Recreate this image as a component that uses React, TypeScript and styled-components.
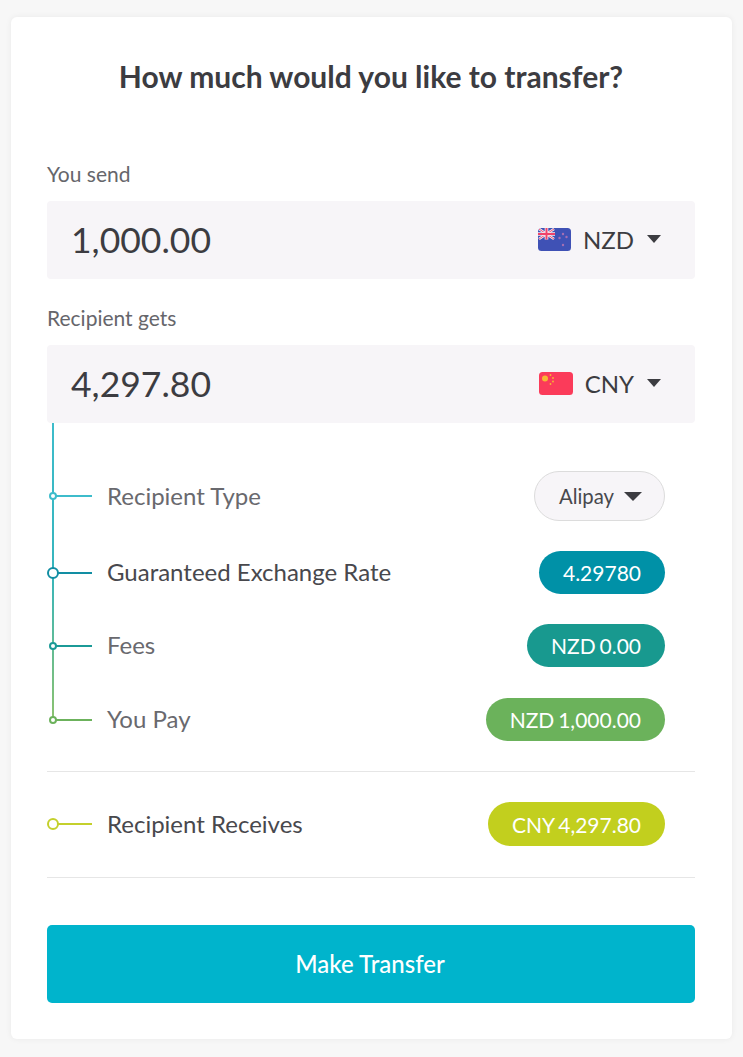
import styled, { createGlobalStyle } from 'styled-components';

const GlobalStyle = createGlobalStyle`
    html, body {
        margin: 0;
        padding: 0;
        background: #f7f7f7;
        font-family: Lato, "Liberation Sans", sans-serif;
    }
`;

const Page = styled.div`
    width: 743px;
    height: 1057px;
    padding: 17px 11px 18px;
    box-sizing: border-box;
    overflow: hidden;
`;

const Card = styled.div`
    width: 721px;
    height: 1022px;
    box-sizing: border-box;
    padding: 0 37px 0 36px;
    background: #fff;
    border-radius: 6px;
    box-shadow: 0 0 6px rgba(0, 0, 0, 0.06);
`;

const Title = styled.h1`
    margin: 0;
    height: 120px;
    line-height: 118px;
    font-size: 30px;
    font-weight: 700;
    color: #3c3c41;
    text-align: center;
`;

const FieldLabel = styled.div`
    height: 64px;
    line-height: 74px;
    font-size: 21px;
    color: #66666b;

    &.second {
        height: 66px;
        line-height: 78px;
    }
`;

const AmountBox = styled.div`
    display: flex;
    align-items: center;
    justify-content: space-between;
    height: 78px;
    padding: 0 34px 2px 24px;
    box-sizing: border-box;
    background: #f7f5f8;
    border-radius: 4px;
`;

const Amount = styled.span`
    font-size: 35.5px;
    color: #3c3c41;
`;

const Currency = styled.div`
    display: flex;
    align-items: center;
    font-size: 24px;
    color: #3c3c41;
`;

const CurrencyCode = styled.span`
    margin: 0 13px 0 12px;
`;

const Caret = styled.span<{ $w?: number }>`
    width: 0;
    height: 0;
    border-left: ${(p) => p.$w ?? 7.5}px solid transparent;
    border-right: ${(p) => p.$w ?? 7.5}px solid transparent;
    border-top: ${(p) => ((p.$w ?? 7.5) * 8) / 7.5}px solid #3c3c41;
`;

const Timeline = styled.div`
    position: relative;
    display: flex;
    flex-direction: column;
    gap: 30px;
    padding: 48px 0 30px;

    &::before {
        content: '';
        position: absolute;
        left: 5px;
        top: 0;
        width: 2px;
        height: 296px;
        background: linear-gradient(#3dbccb 0%, #36b5bd 50%, #8cc26f 100%);
    }
`;

const Row = styled.div`
    display: flex;
    align-items: center;
    padding-right: 30px;

    &:last-child {
        margin-top: 1px;
    }
`;

const Marker = styled.div<{ $line: string; $big?: boolean }>`
    position: relative;
    flex: none;
    width: 45px;
    height: 2px;
    background: linear-gradient(${(p) => p.$line}, ${(p) => p.$line}) no-repeat 5px 0 / 40px 100%;

    &::after {
        content: '';
        position: absolute;
        box-sizing: border-box;
        top: ${(p) => (p.$big ? '-5px' : '-3px')};
        left: ${(p) => (p.$big ? '0' : '2px')};
        width: ${(p) => (p.$big ? '12px' : '8px')};
        height: ${(p) => (p.$big ? '12px' : '8px')};
        background: #fff;
        border: 2px solid ${(p) => p.$line};
        border-radius: 50%;
    }
`;

const RowLabel = styled.span<{ $dark?: boolean }>`
    flex: 1;
    margin-left: 15px;
    padding-bottom: 2px;
    font-size: 24px;
    color: ${(p) => (p.$dark ? '#48484d' : '#69696e')};
`;

const Pill = styled.span<{ $bg: string; $tall?: boolean }>`
    display: flex;
    align-items: center;
    height: ${(p) => (p.$tall ? '44px' : '43px')};
    padding: 0 24px;
    border-radius: 22px;
    background: ${(p) => p.$bg};
    color: #fff;
    font-size: 21px;
    word-spacing: -1.5px;
`;

const SelectPill = styled.div`
    display: flex;
    align-items: center;
    gap: 10px;
    height: 50px;
    padding: 0 22px 0 24px;
    box-sizing: border-box;
    background: #f7f5f8;
    border: 1px solid #dcdcdc;
    border-radius: 25px;
    font-size: 20.3px;
    color: #48484d;
`;

const Receives = styled(Row)`
    height: 44px;
    padding-top: 30px;
    padding-bottom: 31px;
    border-top: 1px solid #e6e6e6;
    border-bottom: 1px solid #e6e6e6;

    &:last-child {
        margin-top: 0;
    }
`;

const TransferButton = styled.button`
    display: block;
    width: 100%;
    height: 78px;
    margin-top: 47px;
    padding: 0 2px 2px 0;
    border: 0;
    border-radius: 5px;
    background: #00b4cc;
    color: #fff;
    font-family: inherit;
    font-size: 24px;
    font-weight: 500;
`;

const NzFlag = () => (
    <svg width="33" height="23" viewBox="0 0 33 23">
        <rect width="33" height="23" rx="3.5" fill="#3f51b5" />
        <path d="M1 1l15 10M16 1L1 11" stroke="#f5eef2" strokeWidth="2.6" />
        <path d="M1 1l15 10M16 1L1 11" stroke="#f0567a" strokeWidth="1" />
        <path d="M8.5 0v11.5M0 6h17" stroke="#f5eef2" strokeWidth="3.6" />
        <path d="M8.5 0v11.5M0 6h17" stroke="#f0436a" strokeWidth="2" />
        <circle cx="25" cy="6" r="1.2" fill="#a56fb4" />
        <circle cx="21.5" cy="10" r="1.2" fill="#a56fb4" />
        <circle cx="28.5" cy="9" r="1.2" fill="#a56fb4" />
        <circle cx="25" cy="17" r="1.2" fill="#a56fb4" />
    </svg>
);

const CnFlag = () => (
    <svg width="34" height="23" viewBox="0 0 34 23">
        <rect width="34" height="23" rx="3.5" fill="#fb3b5a" />
        <circle cx="6" cy="6.5" r="3" fill="#f7b733" />
        <circle cx="11.5" cy="3" r="0.9" fill="#f7b733" />
        <circle cx="14" cy="6" r="0.9" fill="#f7b733" />
        <circle cx="14" cy="9.5" r="0.9" fill="#f7b733" />
        <circle cx="11.5" cy="12" r="0.9" fill="#f7b733" />
    </svg>
);

const App = () => (
    <Page>
        <GlobalStyle />
        <Card>
            <Title>How much would you like to transfer?</Title>

            <FieldLabel>You send</FieldLabel>
            <AmountBox>
                <Amount>1,000.00</Amount>
                <Currency>
                    <NzFlag />
                    <CurrencyCode>NZD</CurrencyCode>
                    <Caret />
                </Currency>
            </AmountBox>

            <FieldLabel className="second">Recipient gets</FieldLabel>
            <AmountBox>
                <Amount>4,297.80</Amount>
                <Currency>
                    <CnFlag />
                    <CurrencyCode>CNY</CurrencyCode>
                    <Caret />
                </Currency>
            </AmountBox>

            <Timeline>
                <Row>
                    <Marker $line="#3dbccb" />
                    <RowLabel>Recipient Type</RowLabel>
                    <SelectPill>
                        Alipay
                        <Caret $w={9} />
                    </SelectPill>
                </Row>
                <Row>
                    <Marker $line="#128ea3" $big />
                    <RowLabel $dark>Guaranteed Exchange Rate</RowLabel>
                    <Pill $bg="#0091a7">4.29780</Pill>
                </Row>
                <Row>
                    <Marker $line="#1b9a97" />
                    <RowLabel>Fees</RowLabel>
                    <Pill $bg="#18998f">NZD 0.00</Pill>
                </Row>
                <Row>
                    <Marker $line="#6cb25c" />
                    <RowLabel>You Pay</RowLabel>
                    <Pill $bg="#6bb25b">NZD 1,000.00</Pill>
                </Row>
            </Timeline>

            <Receives>
                <Marker $line="#c4d02c" $big />
                <RowLabel $dark>Recipient Receives</RowLabel>
                <Pill $bg="#c2cf1e" $tall>CNY 4,297.80</Pill>
            </Receives>

            <TransferButton>Make Transfer</TransferButton>
        </Card>
    </Page>
);

export default App;
